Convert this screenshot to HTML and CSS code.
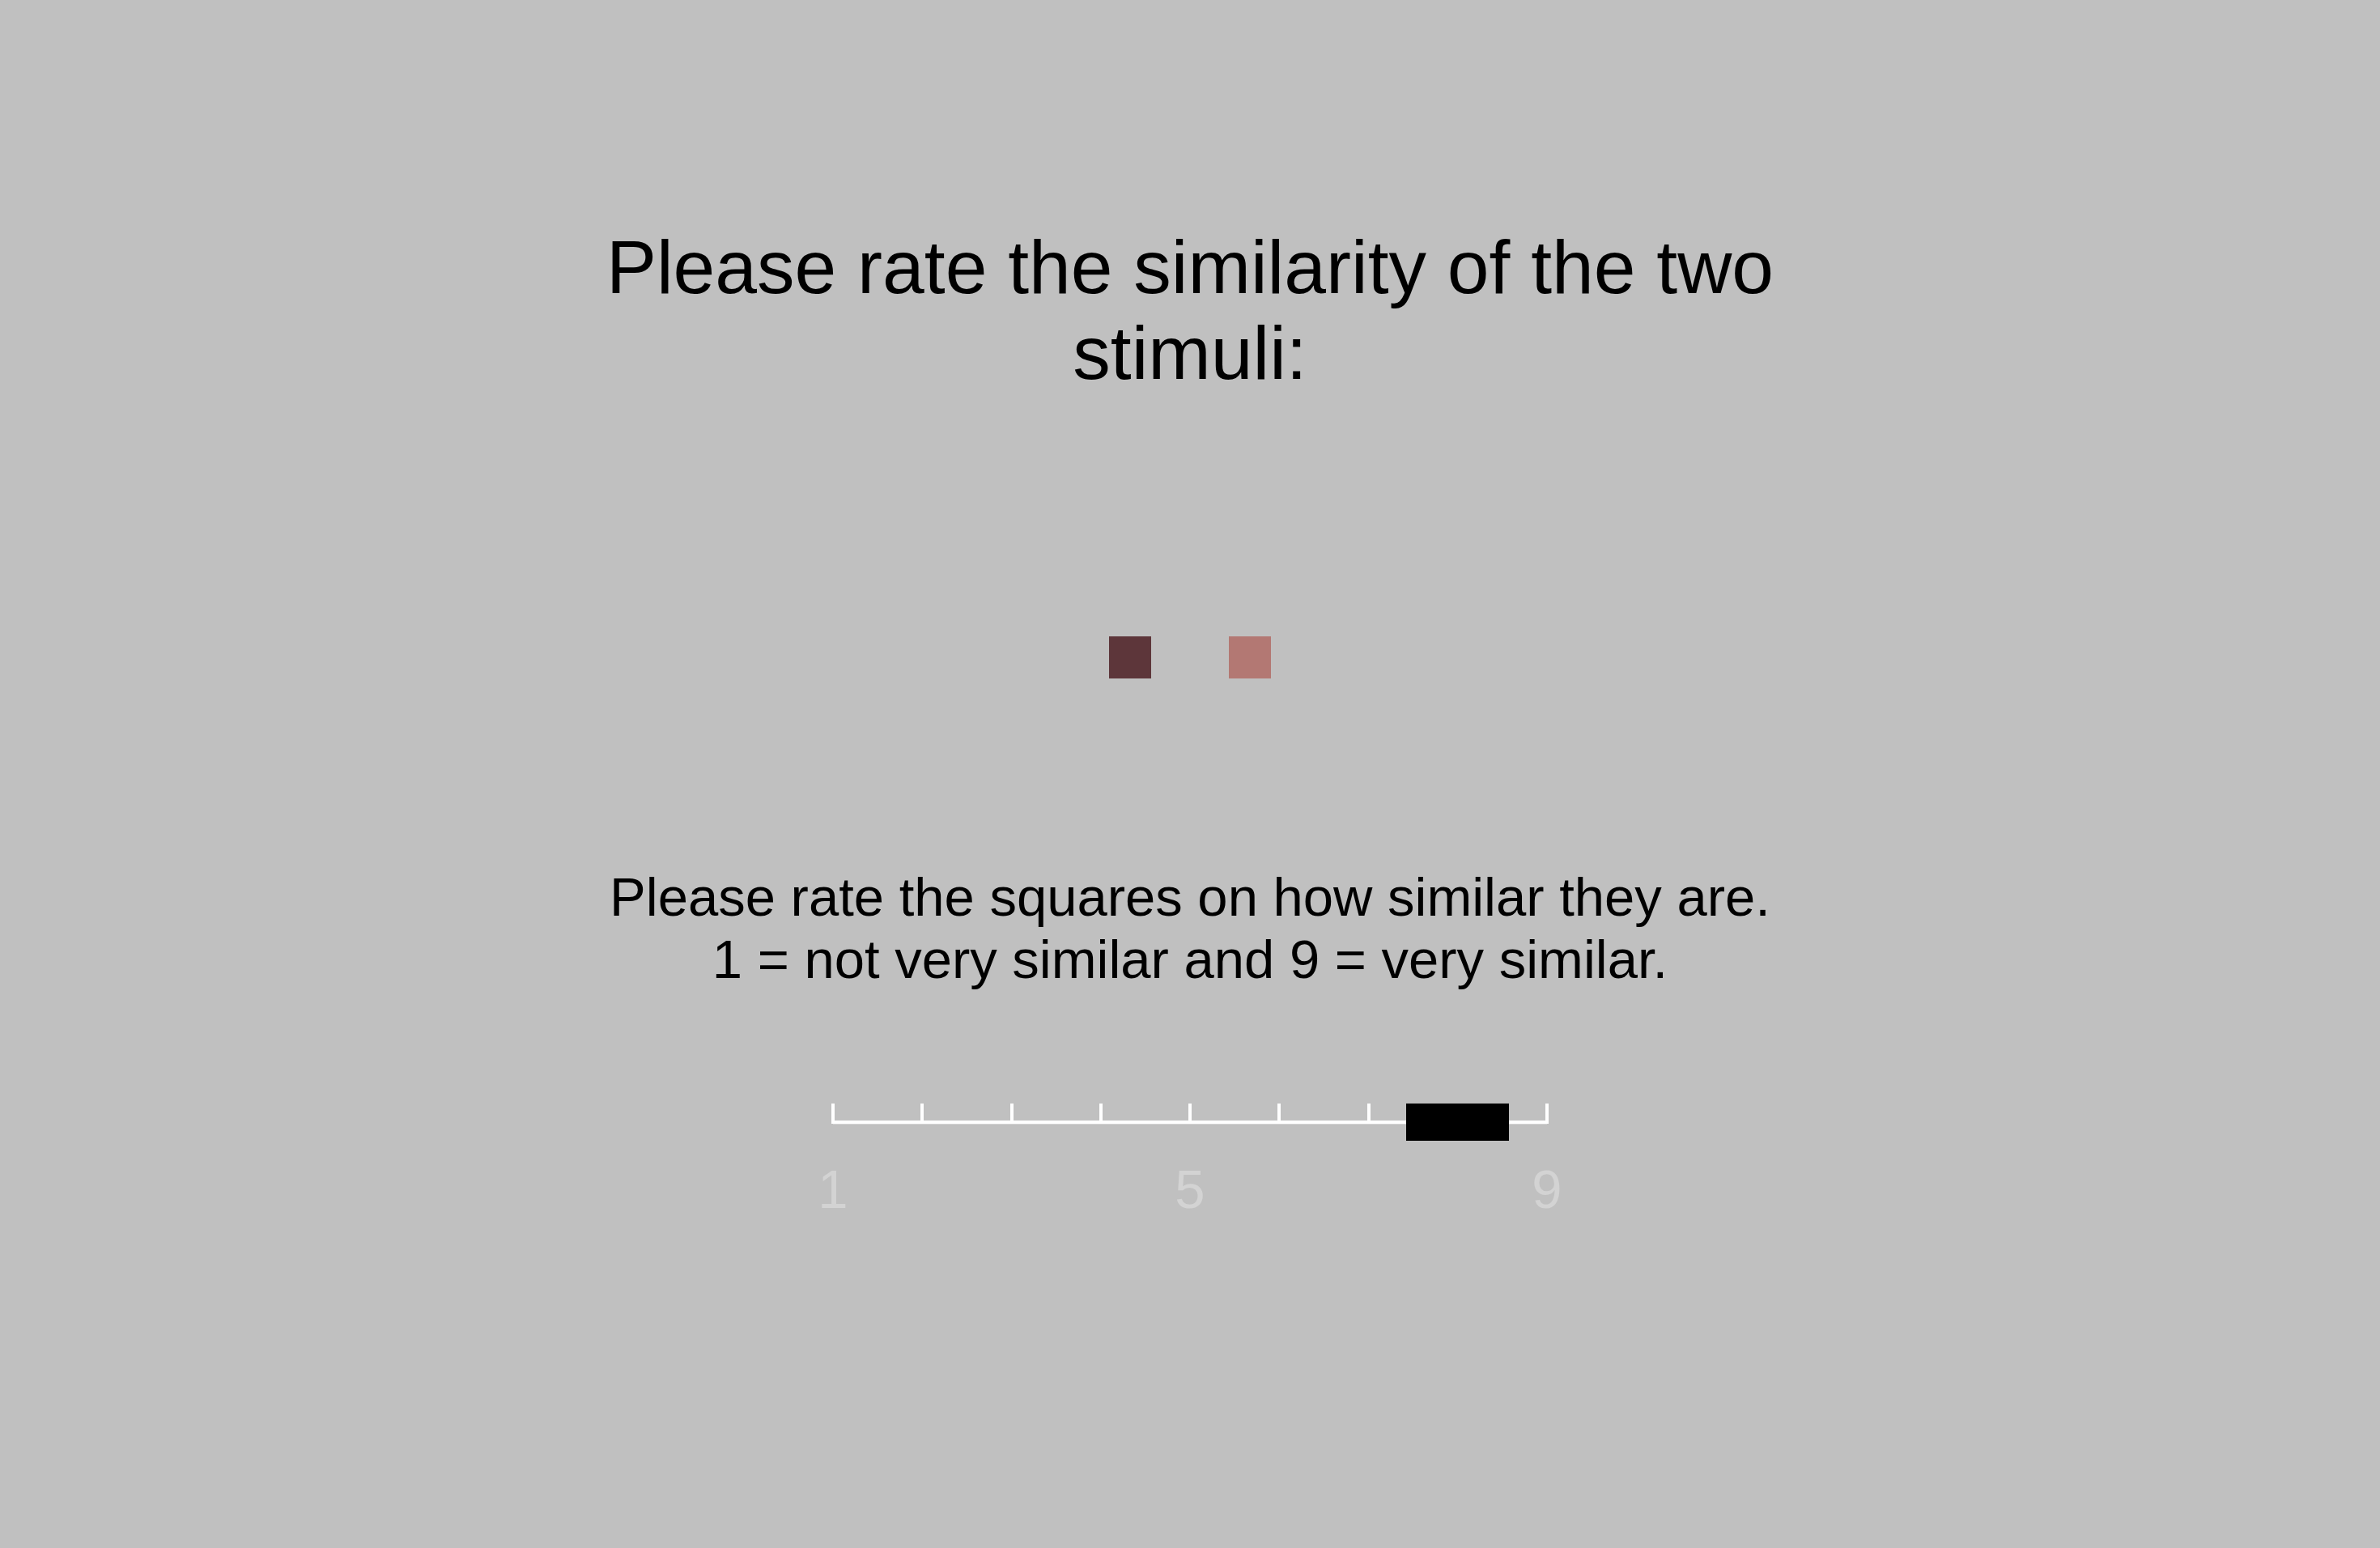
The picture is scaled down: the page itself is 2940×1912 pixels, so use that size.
FILE: index.html
```
<!DOCTYPE html>
<html lang="en">
<head>
  <meta charset="UTF-8">
  <meta name="viewport" content="width=device-width, initial-scale=1.0">
  <title>similarity rating</title>
  <link rel="stylesheet" href="styles.css">
</head>

<body>

  <div class="page">
    <h1 class="title">Please rate the similarity of the two stimuli:</h1>

    <div class="stimuli">
      <div class="square dark"></div>
      <div class="square light"></div>
    </div>

    <p class="prompt">Please rate the squares on how similar they are.<br>1 = not very similar and 9 = very similar.</p>

    <div class="slider">
      <div class="ticks">
        <span></span><span></span><span></span>
        <span></span><span></span><span></span>
        <span></span><span></span><span></span>
      </div>
      <div class="thumb"></div>
    </div>

    <div class="labels">
      <span>1</span>
      <span>5</span>
      <span>9</span>
    </div>
  </div>

</body>
</html>
```

FILE: styles.css
```
body {
  margin: 0;
  background-color: #c0c0c0;
  font-family: "Liberation Sans", Arial, Helvetica, sans-serif;
  color: #000;
}

.page {
  padding-top: 277px;
  text-align: center;
}

.title {
  width: 1520px;
  margin: 0 auto;
  font-size: 93px;
  line-height: 106px;
  font-weight: normal;
}

.stimuli {
  display: flex;
  justify-content: center;
  gap: 96px;
  margin-top: 297px;
}

.square {
  width: 52px;
  height: 52px;
}

.dark {
  background-color: #5d363a;
}

.light {
  background-color: #b37873;
}

.prompt {
  margin: 231px 0 0;
  font-size: 67px;
  line-height: 77px;
}

.slider {
  position: relative;
  width: 886px;
  height: 46px;
  margin: 140px auto 0;
}

.ticks {
  position: relative;
  display: flex;
  justify-content: space-between;
  height: 25px;
}

.ticks span {
  width: 4px;
  height: 25px;
  background-color: #fff;
}

.ticks::after {
  content: "";
  position: absolute;
  left: 2px;
  right: 2px;
  bottom: 0;
  height: 4px;
  background-color: #fff;
  box-shadow: 0 1px 0 #d2d2d2;
}

.thumb {
  position: absolute;
  top: 0;
  left: 710px;
  width: 127px;
  height: 46px;
  background-color: #000;
}

.labels {
  display: flex;
  justify-content: space-between;
  width: 922px;
  margin: 21px auto 0;
  font-size: 67px;
  line-height: 77px;
  color: #d3d3d3;
}

.labels span {
  width: 40px;
  text-align: center;
}
```
